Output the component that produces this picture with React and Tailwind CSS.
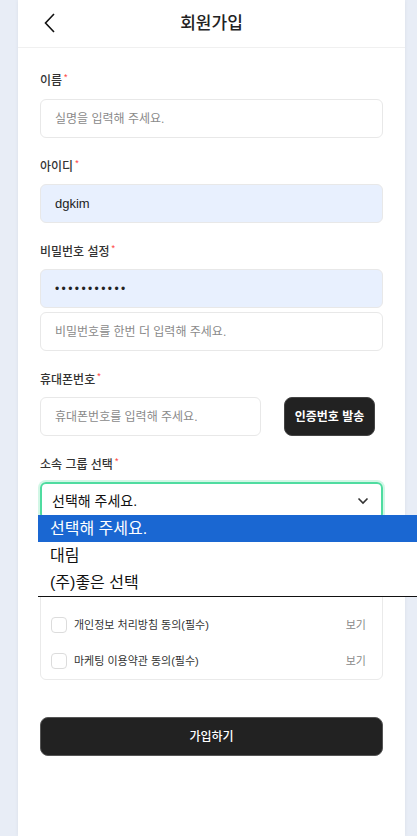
import React from 'react';

const Label = ({ children, className = '' }) => (
  <div className={`flex items-center h-[12px] text-[12px] font-medium text-[#333] leading-none ${className}`}>
    <span>{children}</span>
    <span className="ml-[2px] -mt-[10px] h-[6px] text-[9px] leading-none text-[#ff3b3b]">*</span>
  </div>
);

const inputCls =
  'block w-full h-[39px] rounded-md border border-[#e8e8e8] px-[14px] text-[12px] text-[#222] placeholder:text-[#8a8a8a] outline-none';

const Agree = ({ text, link = true }) => (
  <div className="flex items-center h-9 px-[10px]">
    <span className="w-4 h-4 rounded-[4px] border border-[#dcdcdc] bg-white" />
    <span className="ml-[7px] flex-1 text-[11px] text-[#333]">{text}</span>
    {link && <span className="mr-[6px] text-[11px] text-[#888]">보기</span>}
  </div>
);

const App = () => {
  return (
    <div className="h-[836px] overflow-hidden bg-[#e8edf6] font-['Liberation_Sans','Noto_Sans_CJK_KR',sans-serif]">
      <div className="relative mx-[18px] w-[387px] h-full bg-white shadow-[0_0_4px_rgba(0,0,0,0.06)]">
        <header className="h-[48px] flex items-center justify-center relative border-b border-[#f0f0f0]">
          <button className="absolute left-[24px] top-[12px] text-[#111]">
            <svg width="16" height="22" viewBox="0 0 16 22" fill="none" stroke="currentColor" strokeWidth="1.6">
              <path d="M12 2 L3.5 11 L12 20" />
            </svg>
          </button>
          <h1 className="text-[17px] font-medium text-[#222]">회원가입</h1>
        </header>

        <div className="px-[22px] pt-[27px]">
          <Label>이름</Label>
          <input className={`${inputCls} mt-[12px]`} placeholder="실명을 입력해 주세요." />

          <Label className="mt-[23px]">아이디</Label>
          <input className={`${inputCls} mt-[11px] bg-[#e8f0fe] text-[13px]`} defaultValue="dgkim" />

          <Label className="mt-[23px]">비밀번호 설정</Label>
          <input type="password" className={`${inputCls} mt-[11px] bg-[#e8f0fe] text-[8px] tracking-[2.4px]`} defaultValue="abcdefghijk" />
          <input type="password" className={`${inputCls} mt-[4px]`} placeholder="비밀번호를 한번 더 입력해 주세요." />

          <Label className="mt-[23px]">휴대폰번호</Label>
          <div className="mt-[11px] flex gap-[23px] pr-[8px]">
            <input className={`${inputCls} flex-1`} placeholder="휴대폰번호를 입력해 주세요." />
            <button className="w-[91px] h-[39px] shrink-0 rounded-lg border border-[#444] bg-[#222] text-white text-[12px] font-semibold">
              인증번호 발송
            </button>
          </div>

          <Label className="mt-[23px]">소속 그룹 선택</Label>
          <div className="relative mt-[11px]">
            <div className="h-[38px] rounded-md border-2 border-[#4fdca0] ring-2 ring-[#d2f7e6] flex items-center px-[10px]">
              <span className="flex-1 text-[14px] text-[#111]">선택해 주세요.</span>
              <svg width="12" height="8" viewBox="0 0 12 8" fill="none" stroke="#333" strokeWidth="1.6" className="mr-[2px]">
                <path d="M1.5 1.5 L6 6 L10.5 1.5" />
              </svg>
            </div>
            <div className="absolute left-[-2px] top-[33px] w-[400px] z-10 bg-white border-b-[1.5px] border-[#111] text-[16px] leading-[27px] text-[#111]">
              <div className="bg-[#1a67d2] text-white px-[12px] h-[27px]">선택해 주세요.</div>
              <div className="px-[12px] h-[27px]">대림</div>
              <div className="px-[12px] h-[27px]">(주)좋은 선택</div>
            </div>
          </div>

          <div className="mt-[14px] rounded-md border border-[#eaeaea]">
            <Agree text="" link={false} />
            <Agree text="" link={false} />
            <Agree text="개인정보 처리방침 동의(필수)" />
            <Agree text="마케팅 이용약관 동의(필수)" />
          </div>

          <button className="block mt-[37px] w-full h-[39px] rounded-lg border border-[#555] bg-[#222] text-white text-[12px] font-medium">
            가입하기
          </button>
        </div>
      </div>
    </div>
  );
};

export default App;
